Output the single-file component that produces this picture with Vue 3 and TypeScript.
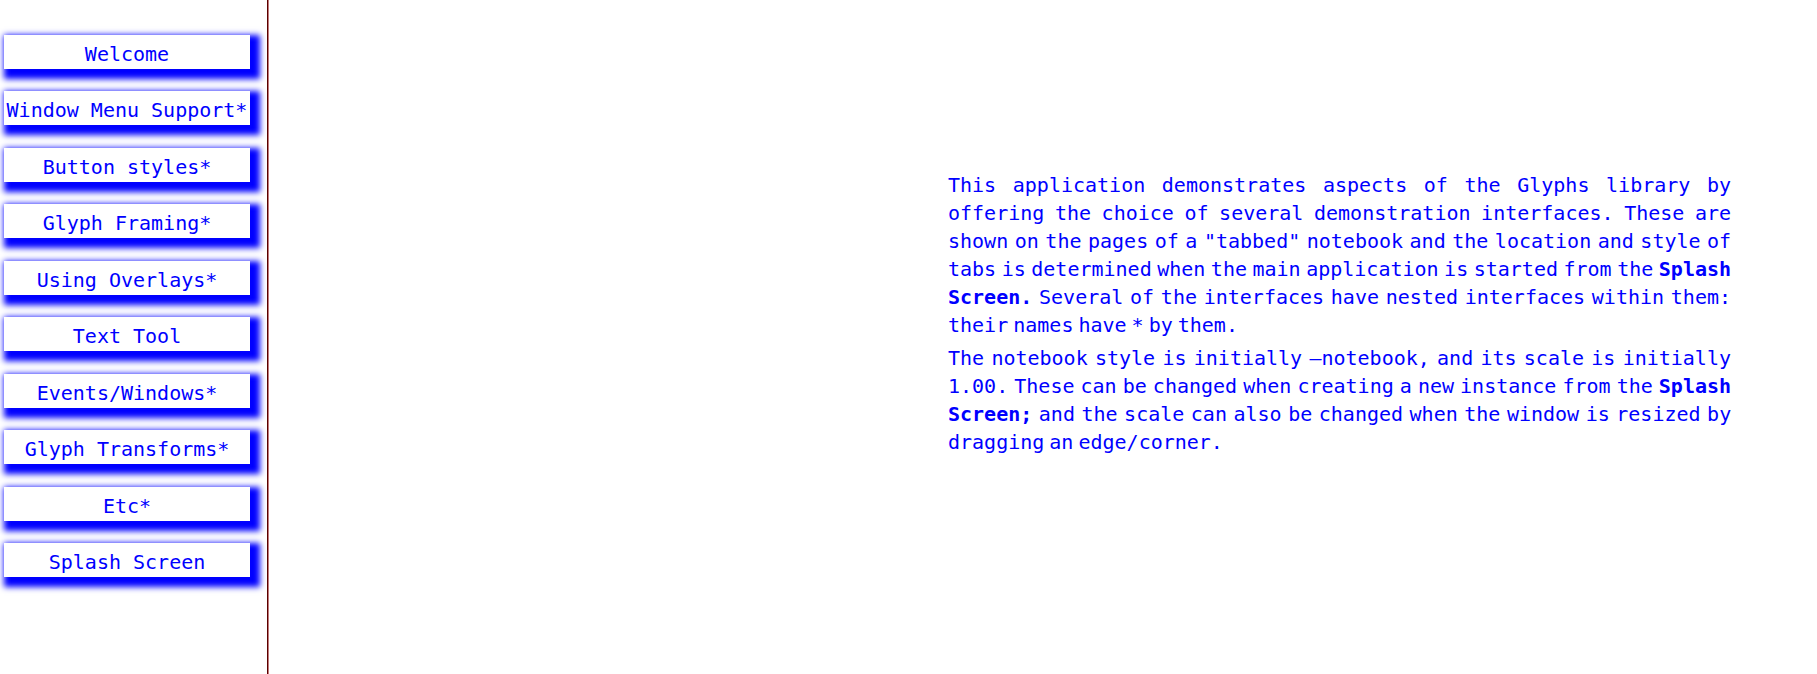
<script setup lang="ts">
import { ref } from 'vue'

interface Word {
  text: string
  strong?: boolean
}

const pages: string[] = [
  'Welcome',
  'Window Menu Support*',
  'Button styles*',
  'Glyph Framing*',
  'Using Overlays*',
  'Text Tool',
  'Events/Windows*',
  'Glyph Transforms*',
  'Etc*',
  'Splash Screen',
]

const current = ref('Welcome')

// Words between underscores are set in bold.
const source: string[] = [
  'This application demonstrates aspects of the Glyphs library by offering the choice of several demonstration interfaces. These are shown on the pages of a "tabbed" notebook and the location and style of tabs is determined when the main application is started from the _Splash_ _Screen._ Several of the interfaces have nested interfaces within them: their names have * by them.',
  'The notebook style is initially –notebook, and its scale is initially 1.00. These can be changed when creating a new instance from the _Splash_ _Screen;_ and the scale can also be changed when the window is resized by dragging an edge/corner.',
]

const paragraphs: Word[][] = source.map((line) =>
  line.split(' ').map((word) =>
    word.startsWith('_') ? { text: word.replace(/_/g, ''), strong: true } : { text: word },
  ),
)
</script>

<template>
  <div class="notebook">
    <nav class="tabs" aria-label="Pages">
      <div class="tab-list">
        <button v-for="page in pages" :key="page" type="button" class="tab" @click="current = page">
          {{ page }}
        </button>
      </div>
    </nav>
    <main class="page">
      <article class="intro">
        <p v-for="(words, p) in paragraphs" :key="p">
          <template v-for="(word, w) in words" :key="w"><component :is="word.strong ? 'strong' : 'span'" class="word">{{ word.text }}</component>{{ ' ' }}</template>
        </p>
      </article>
    </main>
  </div>
</template>

<style>
body {
  margin: 0;
  background: #fff;
}
</style>

<style scoped>
.notebook {
  display: flex;
  min-height: 100vh;
  color: #00f;
  font-size: 20px;
}

.tabs {
  flex: none;
  box-sizing: border-box;
  width: 268px;
  padding: 35px 17px 0 4px;
  border-right: 1px solid #5a0000;
}

.tab-list {
  display: flex;
  flex-direction: column;
  justify-content: space-between;
  height: 542px;
}

.tab {
  box-sizing: border-box;
  height: 34px;
  padding: 4px 0 0;
  border: 0;
  background: #fff;
  box-shadow: 5px 5px 6px 5px #00f;
  color: inherit;
  font-family: 'DejaVu Sans Mono', monospace;
  font-size: 20px;
  line-height: 30px;
  white-space: nowrap;
  cursor: pointer;
}

.page {
  flex: 1;
  display: flex;
  justify-content: flex-end;
  align-items: flex-start;
  padding: 171px 86px 0 24px;
  border-left: 1px solid #c07878;
}

.intro {
  max-width: 783px;
}

/* Word gaps take the narrow space of the proportional face. */
.intro p {
  margin: 0 0 5px;
  font-family: 'Liberation Serif', serif;
  line-height: 28px;
  text-align: justify;
}

.word {
  font-family: 'DejaVu Sans Mono', monospace;
  line-height: 24px;
}
</style>
